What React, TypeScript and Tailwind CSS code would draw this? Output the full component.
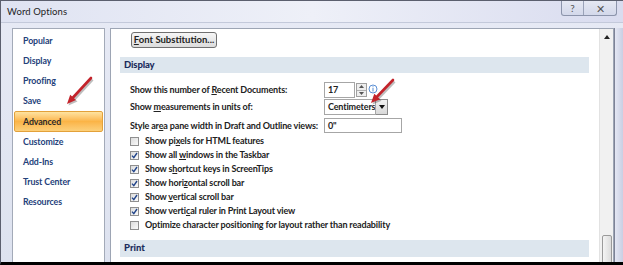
const navItems = [
  'Popular',
  'Display',
  'Proofing',
  'Save',
  'Advanced',
  'Customize',
  'Add-Ins',
  'Trust Center',
  'Resources',
];

function Check({ on }: { on: boolean }) {
  return (
    <span className="w-[9px] h-[9px] border border-[#8f8f8f] bg-gradient-to-br from-[#dcdcdc] to-[#fafafa] flex items-center justify-center shrink-0">
      {on && (
        <svg width="7" height="7" viewBox="0 0 7 7">
          <path d="M1 3.6 L2.8 5.6 L6 1" fill="none" stroke="#21448a" strokeWidth="1.4" />
        </svg>
      )}
    </span>
  );
}

const checks: { on: boolean; label: React.ReactNode }[] = [
  { on: false, label: <>Show pi<u>x</u>els for HTML features</> },
  { on: true, label: <>Show all <u>w</u>indows in the Taskbar</> },
  { on: true, label: <>Show s<u>h</u>ortcut keys in ScreenTips</> },
  { on: true, label: <>Show hori<u>z</u>ontal scroll bar</> },
  { on: true, label: <>Show <u>v</u>ertical scroll bar</> },
  { on: true, label: <>Show verti<u>c</u>al ruler in Print Layout view</> },
  { on: false, label: <>Optimize character positioning for layout rather than readability</> },
];

function Arrow({ tail, base, c1, c2, tip }: { tail: number[]; base: number[]; c1: number[]; c2: number[]; tip: number[] }) {
  return (
    <g>
      <g transform="translate(1.5 1.5)" opacity="0.25">
        <line x1={tail[0]} y1={tail[1]} x2={base[0]} y2={base[1]} stroke="#000" strokeWidth="2.6" />
        <polygon points={`${c1[0]},${c1[1]} ${tip[0]},${tip[1]} ${c2[0]},${c2[1]}`} fill="#000" />
      </g>
      <line x1={tail[0]} y1={tail[1]} x2={base[0]} y2={base[1]} stroke="#c3232b" strokeWidth="2.6" strokeLinecap="round" />
      <polygon points={`${c1[0]},${c1[1]} ${tip[0]},${tip[1]} ${c2[0]},${c2[1]}`} fill="#c3232b" />
    </g>
  );
}

export default function App() {
  return (
    <div className="relative w-[623px] h-[265px] overflow-hidden flex flex-col border-l border-t border-[#5b5f6e] border-b-[3px] border-b-black bg-gradient-to-b from-[#e7eaf5] to-[#dde2ef] text-[#1e1e1e] font-['Lato',sans-serif] whitespace-nowrap">
      {/* Title bar */}
      <div className="h-[21px] flex justify-between items-start bg-gradient-to-r from-[#dfe3f2] via-[#eef0f8] to-[#d9dcef]">
        <span className="pl-[6px] pt-[4px] text-[9.5px] leading-[14px] tracking-[0.1px]">Word Options</span>
        <div className="flex mr-[6px] h-[15px] border border-t-0 border-[#8c94ab] rounded-b-[3px] bg-gradient-to-b from-[#e5e8f3] to-[#d3d8ea]">
          <span className="w-[22px] flex items-center justify-center text-[10px] text-[#555] border-r border-[#9aa2b8]">?</span>
          <span className="w-[32px] flex items-center justify-center text-[11px] text-[#555] leading-none">✕</span>
        </div>
      </div>

      {/* Body */}
      <div className="flex-1 flex border-t border-[#c3c9da] pl-[11px] pt-[5px] min-h-0">
        {/* Left nav */}
        <div className="w-[93px] h-[300px] bg-white border border-[#a3aab8] pt-[2px] px-px">
          {navItems.map((n) =>
            n === 'Advanced' ? (
              <div
                key={n}
                className="h-[21px] flex items-center pl-[8px] text-[8.8px] font-bold tracking-[-0.1px] text-[#2b2b2b] border border-[#e3a13a] rounded-[2px] bg-gradient-to-b from-[#fee3a0] via-[#fbb446] to-[#fcd07a]"
              >
                {n}
              </div>
            ) : (
              <div key={n} className="h-[20px] flex items-center pl-[9px] text-[8.8px] font-bold tracking-[-0.1px] text-[#24417a]">
                {n}
              </div>
            )
          )}
        </div>

        {/* Main panel */}
        <div className="ml-[5px] w-[504px] h-[300px] bg-white border border-[#9da5b4] flex">
          <div className="flex-1 flex flex-col text-[9px] text-[#222] font-bold tracking-[-0.15px]">
            <div className="pt-[3px] pl-[20px]">
              <button className="h-[16px] w-[86px] rounded-[3px] border border-[#707070] bg-gradient-to-b from-[#f6f6f6] to-[#dcdcdc] text-[9.5px] font-bold leading-none text-[#222] tracking-normal">
                <u>F</u>ont Substitution...
              </button>
            </div>

            <div className="mt-[9px] ml-[9px] mr-[10px] h-[16px] bg-[#dde6ee] flex items-center pl-[4px] text-[9.5px] font-black text-[#1c2c5c]">
              Display
            </div>

            <div className="mt-[9px] h-[16px] flex items-center pl-[19px]">
              <span className="w-[194px]">
                Show this number of <u>R</u>ecent Documents:
              </span>
              <span className="w-[31px] h-[16px] border border-[#a6a6a6] flex items-center pl-[3px]">17</span>
              <span className="w-[11px] h-[14px] ml-px border border-[#a0a0a0] flex flex-col bg-[#eeeeee]">
                <span className="flex-1 flex items-center justify-center border-b border-[#b0b0b0]">
                  <svg width="5" height="3" viewBox="0 0 5 3"><path d="M0 3 L2.5 0 L5 3Z" fill="#555" /></svg>
                </span>
                <span className="flex-1 flex items-center justify-center">
                  <svg width="5" height="3" viewBox="0 0 5 3"><path d="M0 0 L2.5 3 L5 0Z" fill="#555" /></svg>
                </span>
              </span>
              <svg width="10" height="10" viewBox="0 0 10 10" className="ml-[1px] -mt-[2px]">
                <circle cx="5" cy="5" r="4" fill="none" stroke="#5b8fd4" strokeWidth="1" />
                <rect x="4.5" y="4" width="1" height="3.5" fill="#5b8fd4" />
                <rect x="4.5" y="2.3" width="1" height="1" fill="#5b8fd4" />
              </svg>
            </div>

            <div className="mt-px h-[16px] flex items-center pl-[19px]">
              <span className="w-[194px]">
                Show <u>m</u>easurements in units of:
              </span>
              <span className="w-[52px] h-[16px] border border-[#a6a6a6] flex items-center pl-[3px] overflow-hidden">Centimeters</span>
              <span className="w-[12px] h-[16px] border border-[#8a8a8a] border-l-0 bg-gradient-to-b from-[#f2f2f2] to-[#d8d8d8] flex items-center justify-center">
                <svg width="6" height="4" viewBox="0 0 6 4"><path d="M0 0 L3 4 L6 0Z" fill="#111" /></svg>
              </span>
            </div>

            <div className="mt-[3px] h-[15px] flex items-center pl-[19px]">
              <span className="w-[194px]">
                Style ar<u>e</u>a pane width in Draft and Outline views:
              </span>
              <span className="w-[78px] h-[15px] border border-[#a6a6a6] flex items-center pl-[3px]">0"</span>
            </div>

            <div className="mt-px flex flex-col">
              {checks.map((c, i) => (
                <div key={i} className="h-[14px] flex items-center pl-[19px] gap-[6px]">
                  <Check on={c.on} />
                  <span>{c.label}</span>
                </div>
              ))}
            </div>

            <div className="mt-[8px] ml-[9px] mr-[10px] h-[17px] bg-[#dde6ee] flex items-center pl-[4px] text-[9.5px] font-black text-[#1c2c5c] tracking-normal">
              Print
            </div>
          </div>

          {/* Scrollbar */}
          <div className="w-[14px] bg-[#f1f1f1] border-l border-[#e2e2e2] flex flex-col items-center">
            <svg width="6" height="4" viewBox="0 0 6 4" className="mt-[6px]">
              <path d="M0 4 L3 0 L6 4Z" fill="#222" />
            </svg>
            <div className="h-[196px]" />
            <div className="w-[10px] h-[60px] border border-[#9a9a9a] rounded-t-[2px] bg-gradient-to-r from-[#f4f4f4] to-[#dcdcdc]" />
          </div>
        </div>

        {/* Right frame edge */}
        <div className="w-[9px] flex">
          <div className="w-px bg-[#7d8396]" />
          <div className="flex-1 bg-gradient-to-r from-[#e4e7f3] to-[#c9cfe3]" />
        </div>
      </div>

      {/* Annotation arrows */}
      <svg className="absolute left-0 top-0 pointer-events-none" width="623" height="265">
        <Arrow tail={[90, 77]} base={[72, 96.5]} c1={[75, 99.1]} c2={[69.2, 93.7]} tip={[66, 103]} />
        <Arrow tail={[392, 79]} base={[376.2, 95.5]} c1={[379.1, 98.3]} c2={[373.3, 92.7]} tip={[370, 102]} />
      </svg>
    </div>
  );
}
